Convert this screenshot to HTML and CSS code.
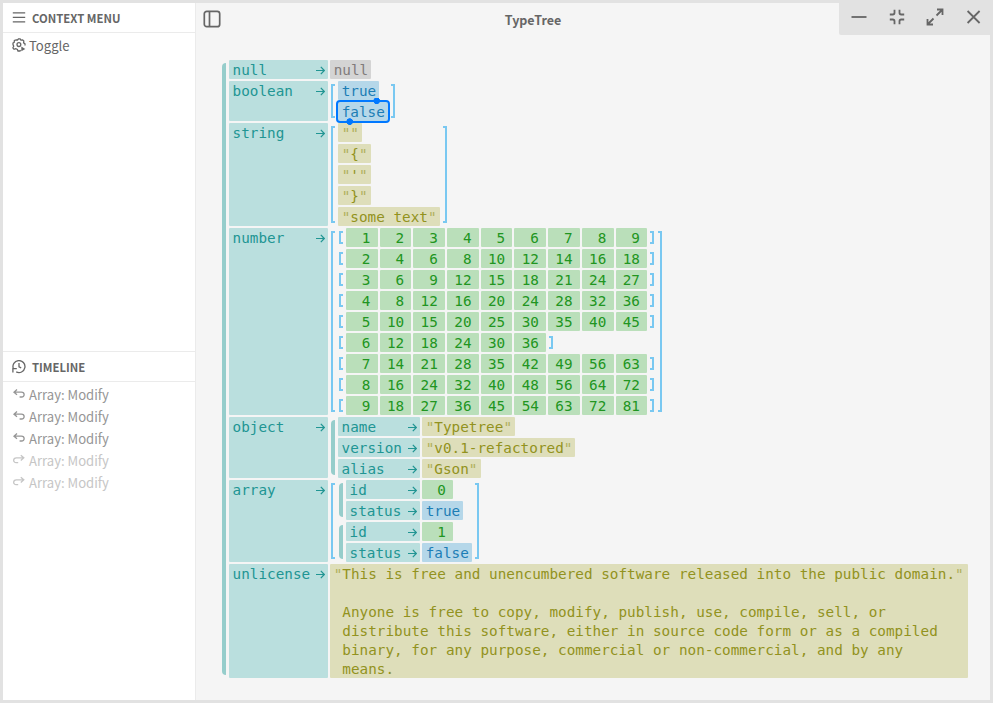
FILE: index.html
```html
<!DOCTYPE html>
<html lang="en">
<head>
<meta charset="utf-8">
<title>TypeTree</title>
<link rel="stylesheet" href="styles.css">
</head>
<body>
<svg width="0" height="0" class="defs">
  <symbol id="arrow" viewBox="0 0 10 10"><path d="M1 5.5H9.2M5.8 1.8 9.3 5.5 5.8 9.2"/></symbol>
  <symbol id="undo" viewBox="0 0 14 14"><path d="M5 2.6 2 5.2l3 2.6M2 5.2h7.4c3.6 0 3.6 4.8.2 4.8H7.6"/></symbol>
  <symbol id="redo" viewBox="0 0 14 14"><path d="M8.8 2.2 11.8 4.8l-3 2.6M11.8 4.8H4.4c-3.6 0-3.6 4.8-.2 4.8h2"/></symbol>
</svg>
<div class="window">
  <aside class="sidebar">
    <section class="panel context">
      <h2><svg viewBox="0 0 14 14" width="14" height="14"><path d="M.8 1.8h12.4M.8 6.3h12.4M.8 10.8h12.4"/></svg><span>CONTEXT MENU</span></h2>
      <div class="item"><svg viewBox="0 0 14 14" width="14" height="14"><path d="M8.6 12.2 8 13H6l-.6-1.6-1.7-.7-1.6.6-1.2-1.5.8-1.6L1 6.5 1 5l1.2-.7.2-1.9 1.8-.5L5.5 2 6.5.8h1.6l.8 1.3 1.7-.2 1.2 1.2-.2 1.8 1.4.9v1.6"/><circle cx="6.9" cy="6.6" r="1.9"/><path class="solid" d="m9.3 8.6 4 2.3-4 2.3z"/></svg><span>Toggle</span></div>
    </section>
    <section class="panel timeline">
      <h2><svg viewBox="0 0 14 14" width="14" height="14"><path d="M1.4 8.8A6 6 0 1 1 4.2 11.9M.9 12.5V8.6h3.9M7 3v3.8l2.2 1"/></svg><span>TIMELINE</span></h2>
      <div class="item past"><svg width="14" height="14"><use href="#undo"/></svg><span>Array: Modify</span></div>
      <div class="item past"><svg width="14" height="14"><use href="#undo"/></svg><span>Array: Modify</span></div>
      <div class="item past"><svg width="14" height="14"><use href="#undo"/></svg><span>Array: Modify</span></div>
      <div class="item future"><svg width="14" height="14"><use href="#redo"/></svg><span>Array: Modify</span></div>
      <div class="item future"><svg width="14" height="14"><use href="#redo"/></svg><span>Array: Modify</span></div>
    </section>
  </aside>
  <main>
    <header>
      <svg class="toggle" viewBox="0 0 18 18" width="18" height="18"><rect x="1.3" y="1.3" width="15.4" height="15.4" rx="2.5"/><path d="M6.5 1.5v15"/></svg>
      <h1>TypeTree</h1>
      <nav>
        <svg viewBox="0 0 20 20" width="20" height="20"><path d="M2.5 10h15"/></svg>
        <svg viewBox="0 0 20 20" width="20" height="20"><path d="M7.5 2.8v3q0 1.7-1.7 1.7h-3M12.5 2.8v3q0 1.7 1.7 1.7h3M7.5 17.2v-3q0-1.7-1.7-1.7h-3M12.5 17.2v-3q0-1.7 1.7-1.7h3"/></svg>
        <svg viewBox="0 0 20 20" width="20" height="20"><path d="M12 2.5h5.5V8M17.5 2.5l-6 6M8 17.5H2.5V12M2.5 17.5l6-6"/></svg>
        <svg viewBox="0 0 20 20" width="20" height="20"><path d="m4.6 4 12 12M16.6 4l-12 12"/></svg>
      </nav>
    </header>
    <div class="tree">
      <div class="bar"></div>
      <div class="object root">
        <div class="key"><span>null</span><svg><use href="#arrow"/></svg></div>
        <div class="null">null</div>

        <div class="key"><span>boolean</span><svg><use href="#arrow"/></svg></div>
        <div class="array"><i class="open"></i><div class="rows">
          <div class="bool">true</div>
          <div class="bool selected">false</div>
        </div><i class="close"></i></div>

        <div class="key"><span>string</span><svg><use href="#arrow"/></svg></div>
        <div class="array"><i class="open"></i><div class="rows">
          <div class="str"><q></q><q></q></div>
          <div class="str"><q></q><span>{</span><q></q></div>
          <div class="str"><q></q><span>'</span><q></q></div>
          <div class="str"><q></q><span>}</span><q></q></div>
          <div class="str"><q></q><span>some text</span><q></q></div>
        </div><i class="close"></i></div>

        <div class="key"><span>number</span><svg><use href="#arrow"/></svg></div>
        <div class="array"><i class="open"></i><div class="rows">
          <div class="array flat"><i class="open"></i><b>1</b><b>2</b><b>3</b><b>4</b><b>5</b><b>6</b><b>7</b><b>8</b><b>9</b><i class="close"></i></div>
          <div class="array flat"><i class="open"></i><b>2</b><b>4</b><b>6</b><b>8</b><b>10</b><b>12</b><b>14</b><b>16</b><b>18</b><i class="close"></i></div>
          <div class="array flat"><i class="open"></i><b>3</b><b>6</b><b>9</b><b>12</b><b>15</b><b>18</b><b>21</b><b>24</b><b>27</b><i class="close"></i></div>
          <div class="array flat"><i class="open"></i><b>4</b><b>8</b><b>12</b><b>16</b><b>20</b><b>24</b><b>28</b><b>32</b><b>36</b><i class="close"></i></div>
          <div class="array flat"><i class="open"></i><b>5</b><b>10</b><b>15</b><b>20</b><b>25</b><b>30</b><b>35</b><b>40</b><b>45</b><i class="close"></i></div>
          <div class="array flat"><i class="open"></i><b>6</b><b>12</b><b>18</b><b>24</b><b>30</b><b>36</b><i class="close"></i></div>
          <div class="array flat"><i class="open"></i><b>7</b><b>14</b><b>21</b><b>28</b><b>35</b><b>42</b><b>49</b><b>56</b><b>63</b><i class="close"></i></div>
          <div class="array flat"><i class="open"></i><b>8</b><b>16</b><b>24</b><b>32</b><b>40</b><b>48</b><b>56</b><b>64</b><b>72</b><i class="close"></i></div>
          <div class="array flat"><i class="open"></i><b>9</b><b>18</b><b>27</b><b>36</b><b>45</b><b>54</b><b>63</b><b>72</b><b>81</b><i class="close"></i></div>
        </div><i class="close"></i></div>

        <div class="key"><span>object</span><svg><use href="#arrow"/></svg></div>
        <div class="nest"><div class="bar"></div><div class="object details">
          <div class="key"><span>name</span><svg><use href="#arrow"/></svg></div><div class="str"><q></q><span>Typetree</span><q></q></div>
          <div class="key"><span>version</span><svg><use href="#arrow"/></svg></div><div class="str"><q></q><span>v0.1-refactored</span><q></q></div>
          <div class="key"><span>alias</span><svg><use href="#arrow"/></svg></div><div class="str"><q></q><span>Gson</span><q></q></div>
        </div></div>

        <div class="key"><span>array</span><svg><use href="#arrow"/></svg></div>
        <div class="array"><i class="open"></i><div class="rows">
          <div class="nest"><div class="bar"></div><div class="object record">
            <div class="key"><span>id</span><svg><use href="#arrow"/></svg></div><b>0</b>
            <div class="key"><span>status</span><svg><use href="#arrow"/></svg></div><div class="bool">true</div>
          </div></div>
          <div class="nest"><div class="bar"></div><div class="object record">
            <div class="key"><span>id</span><svg><use href="#arrow"/></svg></div><b>1</b>
            <div class="key"><span>status</span><svg><use href="#arrow"/></svg></div><div class="bool">false</div>
          </div></div>
        </div><i class="close"></i></div>

        <div class="key"><span>unlicense</span><svg><use href="#arrow"/></svg></div>
        <div class="str block"><q></q><span>This is free and unencumbered software released into the public domain.

Anyone is free to copy, modify, publish, use, compile, sell, or
distribute this software, either in source code form or as a compiled
binary, for any purpose, commercial or non-commercial, and by any
means.</span><q></q></div>
      </div>
    </div>
  </main>
</div>
</body>
</html>
```
FILE: styles.css
```css
* { box-sizing: border-box; }
body { margin: 0; font: 13.1px/20px "Noto Sans CJK SC", "Noto Sans", sans-serif; color: #666; }
svg { fill: none; stroke: currentColor; stroke-width: 1.3; flex: none; }
.defs { position: absolute; }
.solid { fill: currentColor; stroke: none; }
.window { display: flex; width: 993px; height: 703px; border: 3px solid #e2e2e2; background: #f5f5f5; }

.sidebar { display: flex; flex-direction: column; width: 193px; background: #fff; border-right: 1px solid #ebebeb; }
.context { height: 348px; }
.timeline { flex: 1; border-top: 1px solid #ebebeb; }
.panel h2 { display: flex; align-items: center; gap: 6px; height: 30px; margin: 0 0 1px; padding: 0 9px; border-bottom: 1px solid #ebebeb; font-size: 11.35px; font-weight: 700; }
.panel h2 span { padding-top: 1px; }
.item { display: flex; align-items: center; gap: 3px; height: 22px; padding-left: 9px; }
.item span { padding-top: 1px; }
.past { color: #969696; }
.future { color: #c6c6c6; }

main { flex: 1; min-width: 0; }
header { display: grid; grid-template-columns: 31px 1fr 151px; align-items: center; height: 32px; }
.toggle { margin-left: 7px; stroke-width: 1.7; }
h1 { margin: 0; padding-top: 1px; text-align: center; font-size: 12.5px; font-weight: 700; }
nav { display: flex; align-items: center; gap: 18.3px; height: 32px; padding: 0 0 4px 9.5px; background: #e2e2e2; border-bottom-left-radius: 2px; }
nav svg { stroke-width: 1.8; }

.tree { display: flex; width: 746px; margin: 25px 0 0 26px; font: 14.3px/19px "DejaVu Sans Mono", monospace; letter-spacing: .022px; }
.bar { width: 4px; margin: 3px 3px 3px 0; border-radius: 4px 0 0 4px; background: #96cdcb; }
.nest { display: flex; padding-left: 1px; }
.object { display: grid; gap: 2px; justify-items: start; }
.root { grid-template-columns: 99px 638px; }
.details { grid-template-columns: 82px auto; }
.record { grid-template-columns: 74px auto; }
.key { display: flex; justify-content: space-between; justify-self: stretch; padding: 1px 3px 0 3.5px; border-radius: 1px; background: #badfde; color: #219593; }
.key span { height: 18px; }
.key svg { width: 10px; height: 10px; margin-top: 4px; stroke-width: 1.2; }
.null, .bool, .str, b { height: 19px; padding: 1px 3px 0 3.7px; border-radius: 1px; }
.null { background: #d4d4d4; color: #807b7b; }
.bool { background: #b5d7e9; color: #1c7db5; }
.str { display: flex; background: #dedeba; color: #929220; }
.str span { white-space: pre; }
.block { width: 638px; height: 114px; }
q { quotes: none; opacity: .6; }
q::before { content: '"'; }
q::after { content: none; }
.array { display: flex; }
.rows { display: flex; flex-direction: column; align-items: flex-start; gap: 2px; }
.open, .close { flex: none; width: 4px; margin: 3px; border: 2px solid #79c8f1; }
.open { margin-left: 1px; border-right: 0; }
.close { margin-right: 1px; border-left: 0; }
b { width: 31.7px; padding: 1px 7.2px 0; background: #badfba; color: #219521; font-weight: 400; text-align: right; }
.record b { width: 31.2px; }
.flat b + b { margin-left: 2px; }
.selected { position: relative; }
.selected::before { content: ""; position: absolute; inset: -2px; border: 2px solid #0078ff; border-radius: 4px; }
.selected::after { content: ""; position: absolute; inset: -4px; background: radial-gradient(circle at 42.7px 2.8px, #0078ff 3px, transparent 3.6px), radial-gradient(circle at 15.7px 23.6px, #0078ff 3px, transparent 3.6px); }
```
